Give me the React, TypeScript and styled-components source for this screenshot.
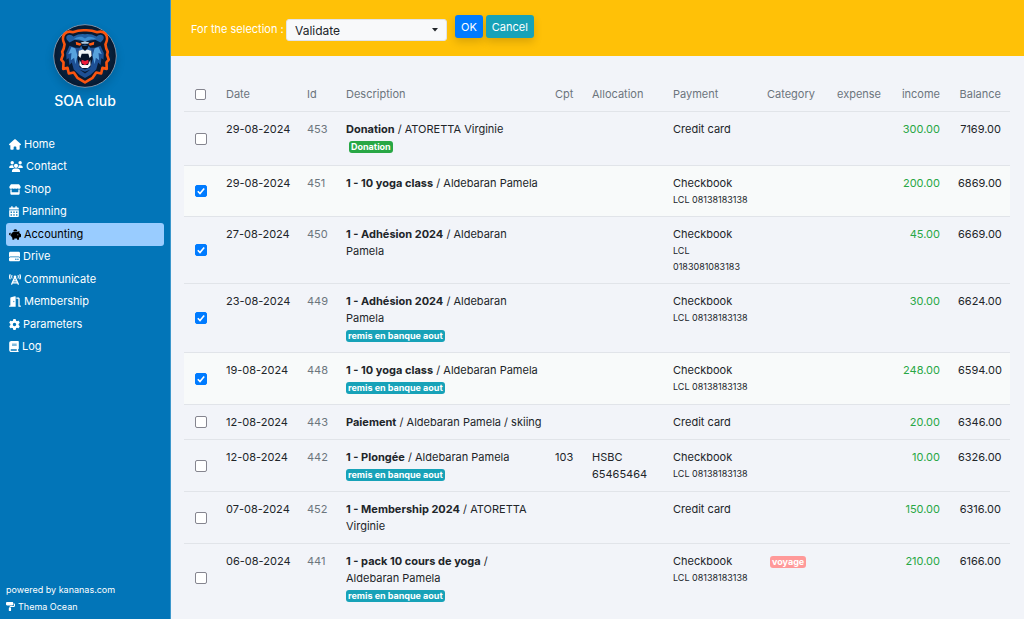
import React, { useState } from "react";
import styled, { createGlobalStyle } from "styled-components";
import {
  FaHouse, FaUsers, FaStore, FaCalendarDays, FaPiggyBank, FaHardDrive,
  FaTowerCell, FaDoorOpen, FaGear, FaBook, FaPaintRoller,
} from "react-icons/fa6";

const GlobalStyle = createGlobalStyle`
  *, *::before, *::after { box-sizing: border-box; }
  body {
    margin: 0;
    background: #f2f4f9;
    color: #212529;
    font: 11px/17px Inter, "Liberation Sans", sans-serif;
  }
  button, select, input { font-family: inherit; }
`;

const Page = styled.div`
  display: flex;
  min-height: 100vh;
`;

const Sidebar = styled.aside`
  flex: 0 0 171px;
  display: flex;
  flex-direction: column;
  padding: 24px 6px 4px;
  background: #0275b8;
  border-right: 1px solid #3c97cc;
  color: #fff;
`;

const Brand = styled.div`
  display: flex;
  flex-direction: column;
  align-items: center;
  gap: 2px;
  margin-bottom: 22px;
  font-size: 14px;
  font-weight: 500;
  line-height: 21px;
  svg {
    border-radius: 50%;
    box-shadow: 0 4px 8px rgba(0, 0, 0, 0.15);
  }
`;

const Nav = styled.nav`
  display: grid;
  grid-auto-rows: 1fr;
  height: 225px;
`;

const NavLink = styled.a<{ $active?: boolean; $iconWidth: number }>`
  display: flex;
  align-items: center;
  gap: 3px;
  padding: 0 3px;
  border-radius: 3px;
  color: ${(p) => (p.$active ? "#000" : "#fff")};
  background: ${(p) => (p.$active ? "#99ccff" : "transparent")};
  text-decoration: none;
  svg {
    width: ${(p) => p.$iconWidth}px;
    height: 11px;
  }
`;

const SideFooter = styled.footer`
  display: flex;
  flex-direction: column;
  margin-top: auto;
  font-size: 9px;
  a {
    display: flex;
    align-items: center;
    gap: 3px;
    color: #fff;
    text-decoration: none;
  }
`;

const Main = styled.main`
  flex: 1;
  min-width: 0;
`;

const SelectionBar = styled.form`
  display: flex;
  align-items: flex-start;
  height: 56px;
  padding: 15px 20px 0;
  background: #ffc107;
`;

const SelectionLabel = styled.label`
  width: 95px;
  padding-top: 6px;
  color: #fff;
  white-space: nowrap;
`;

const SelectBox = styled.div`
  display: grid;
  align-items: center;
  width: 161px;
  margin: 4px 8px 0 0;
  > * { grid-area: 1 / 1; }
  svg {
    justify-self: end;
    margin-right: 9px;
    pointer-events: none;
  }
`;

const Select = styled.select`
  appearance: none;
  width: 100%;
  height: 22px;
  padding: 0 8px;
  border: 1px solid #e0e3ea;
  border-radius: 3px;
  background: #f8f9fa;
  color: #212529;
  font-size: 12px;
`;

const Button = styled.button<{ $color: string }>`
  height: 23px;
  margin-right: 3px;
  padding: 0 6px;
  border: 0;
  border-radius: 3px;
  background: ${(p) => p.$color};
  color: #fff;
  font-size: 11px;
  box-shadow: 0 4px 8px rgba(0, 0, 0, 0.15);
`;

const TableWrap = styled.section`
  padding: 21px 14px 0 13px;
`;

const Table = styled.table`
  width: 100%;
  table-layout: fixed;
  border-collapse: separate;
  border-spacing: 0;
`;

const HeadCell = styled.th<{ $width?: number; $align?: string }>`
  width: ${(p) => (p.$width ? `${p.$width}px` : "auto")};
  padding: 9px 9px 8px;
  color: #6c757d;
  font-weight: 400;
  text-align: ${(p) => p.$align ?? "left"};
  vertical-align: middle;
`;

const Row = styled.tr<{ $highlight?: boolean }>`
  background: ${(p) => (p.$highlight ? "#f8fafa" : "transparent")};
`;

const Cell = styled.td<{ $align?: string; $color?: string }>`
  padding: 9px 9px 8px;
  border-top: 1px solid #e1e4e9;
  color: ${(p) => p.$color ?? "inherit"};
  text-align: ${(p) => p.$align ?? "left"};
  vertical-align: top;
`;

const CheckCell = styled(Cell)`
  padding: 0;
  text-align: center;
  vertical-align: middle;
`;

const DateCell = styled(Cell)`
  white-space: nowrap;
`;

const DescriptionCell = styled(Cell)`
  padding-right: 2px;
`;

const Check = styled.input<{ $small?: boolean }>`
  appearance: none;
  display: block;
  width: ${(p) => (p.$small ? 11 : 12)}px;
  height: ${(p) => (p.$small ? 11 : 12)}px;
  margin: 0 auto;
  border: 1px solid #85858f;
  border-radius: 2px;
  background: #fff;
  &:checked {
    border-color: #007bff;
    background: #007bff
      url("data:image/svg+xml,%3Csvg xmlns='http://www.w3.org/2000/svg' viewBox='0 0 10 10'%3E%3Cpath d='M1.8 5.2l2.2 2.3L8.2 2.4' fill='none' stroke='white' stroke-width='1.6'/%3E%3C/svg%3E")
      center / 10px 10px no-repeat;
  }
`;

const Note = styled.div`
  font-size: 9px;
  line-height: 16px;
`;

const BadgeLine = styled.div<{ $inset?: boolean }>`
  display: flex;
  align-items: center;
  height: 17px;
  padding-left: ${(p) => (p.$inset ? 3 : 0)}px;
`;

const DonationLine = styled(BadgeLine)`
  margin-bottom: 2px;
`;

const Badge = styled.span<{ $color: string }>`
  padding: 0 2px;
  border-radius: 3px;
  background: ${(p) => p.$color};
  color: #fff;
  font-size: 9px;
  font-weight: 700;
  line-height: 12px;
  white-space: nowrap;
`;

const TEAL = "#17a2b8";
const GREEN = "#28a745";

const navItems = [
  { label: "Home", Icon: FaHouse, width: 12 },
  { label: "Contact", Icon: FaUsers, width: 14 },
  { label: "Shop", Icon: FaStore, width: 12 },
  { label: "Planning", Icon: FaCalendarDays, width: 10 },
  { label: "Accounting", Icon: FaPiggyBank, width: 12, active: true },
  { label: "Drive", Icon: FaHardDrive, width: 11 },
  { label: "Communicate", Icon: FaTowerCell, width: 12 },
  { label: "Membership", Icon: FaDoorOpen, width: 12 },
  { label: "Parameters", Icon: FaGear, width: 11 },
  { label: "Log", Icon: FaBook, width: 10 },
];

type Entry = {
  date: string;
  id: number;
  title: string;
  who: string;
  tag?: string;
  donation?: boolean;
  cpt?: string;
  allocation?: string;
  payment: string;
  note?: string;
  category?: string;
  income: string;
  balance: string;
  checked?: boolean;
  highlight?: boolean;
};

const BANKED = "remis en banque aout";
const CHECK_NOTE = "LCL 08138183138";

const entries: Entry[] = [
  { date: "29-08-2024", id: 453, title: "Donation", who: "ATORETTA Virginie", tag: "Donation", donation: true, payment: "Credit card", income: "300.00", balance: "7169.00" },
  { date: "29-08-2024", id: 451, title: "1 - 10 yoga class", who: "Aldebaran Pamela", payment: "Checkbook", note: CHECK_NOTE, income: "200.00", balance: "6869.00", checked: true, highlight: true },
  { date: "27-08-2024", id: 450, title: "1 - Adhésion 2024", who: "Aldebaran Pamela", payment: "Checkbook", note: "LCL 0183081083183", income: "45.00", balance: "6669.00", checked: true },
  { date: "23-08-2024", id: 449, title: "1 - Adhésion 2024", who: "Aldebaran Pamela", tag: BANKED, payment: "Checkbook", note: CHECK_NOTE, income: "30.00", balance: "6624.00", checked: true },
  { date: "19-08-2024", id: 448, title: "1 - 10 yoga class", who: "Aldebaran Pamela", tag: BANKED, payment: "Checkbook", note: CHECK_NOTE, income: "248.00", balance: "6594.00", checked: true, highlight: true },
  { date: "12-08-2024", id: 443, title: "Paiement", who: "Aldebaran Pamela / skiing", payment: "Credit card", income: "20.00", balance: "6346.00" },
  { date: "12-08-2024", id: 442, title: "1 - Plongée", who: "Aldebaran Pamela", tag: BANKED, cpt: "103", allocation: "HSBC 65465464", payment: "Checkbook", note: CHECK_NOTE, income: "10.00", balance: "6326.00" },
  { date: "07-08-2024", id: 452, title: "1 - Membership 2024", who: "ATORETTA Virginie", payment: "Credit card", income: "150.00", balance: "6316.00" },
  { date: "06-08-2024", id: 441, title: "1 - pack 10 cours de yoga", who: "Aldebaran Pamela", tag: BANKED, payment: "Checkbook", note: CHECK_NOTE, category: "voyage", income: "210.00", balance: "6166.00" },
];

function BearLogo() {
  return (
    <svg width="64" height="64" viewBox="0 0 194 194" role="img" aria-label="SOA club bear">
      <defs>
        <radialGradient id="disc" cx="50%" cy="50%" r="50%">
          <stop offset="0" stopColor="#0c3155" />
          <stop offset="0.75" stopColor="#082340" />
          <stop offset="1" stopColor="#06182f" />
        </radialGradient>
      </defs>
      <circle cx="97" cy="97" r="95" fill="url(#disc)" stroke="#8796aa" strokeWidth="3" />
      <path
        d="M35 62Q25 42 35 30Q44 20 60 25Q78 18 97 19Q116 18 134 25Q150 20 159 30Q169 42 159 62Q160 74 166 84L164 94L169 108L162 116L163 136L150 133L146 150L131 147L120 163L97 177L74 163L63 147L48 150L44 133L31 136L32 116L25 108L30 94L28 84Q34 74 35 62Z"
        fill="#071a33" stroke="#fa5510" strokeWidth="8" strokeLinejoin="round"
      />
      <path d="M42 48Q37 36 46 33Q56 31 62 38Q78 29 97 31Q116 29 132 38Q138 31 148 33Q157 36 152 48L144 56L128 48L97 52L66 48L50 56Z" fill="#2260a3" />
      <path d="M62 46Q74 36 88 39L97 44L106 39Q120 36 132 46L116 46L97 53L78 46Z" fill="#3e8ed0" />
      <path d="M50 66L40 88L41 108L47 103L50 124L57 117L63 138L80 154L97 164L114 154L131 138L137 117L144 124L147 103L153 108L154 88L144 66L126 72H68Z" fill="#1d4f94" />
      <path d="M56 70L46 92L56 88L54 110L64 102L68 122L74 96L68 74ZM138 70L148 92L138 88L140 110L130 102L126 122L120 96L126 74Z" fill="#58a3de" />
      <path d="M62 52L88 58L106 58L132 52L128 70L110 68L97 62L84 68L66 70Z" fill="#071a33" />
      <path d="M69 54L87 60L82 66L70 63ZM125 54L107 60L112 66L124 63Z" fill="#ff5b14" />
      <path d="M84 56L97 52L110 56L106 60H88Z" fill="#b4cbe0" />
      <path d="M84 68L97 62L110 68L118 84H76Z" fill="#2b68b0" />
      <path d="M86 66H108L104 76L97 80L90 76Z" fill="#050f20" />
      <path d="M77 82L92 77L97 82L102 77L117 82L120 106L113 131L97 138L81 131L74 106Z" fill="#06142a" />
      <path d="M78 81L91 77L97 82L103 77L116 81L117 96L111 103L107 90H87L83 103L77 96Z" fill="#f1f5f8" />
      <path d="M81 109L88 124H106L113 109L114 125L106 133H88L80 125Z" fill="#f5f7f8" />
      <path d="M87 108L97 112L107 108L108 118L97 125L86 118Z" fill="#ee1c3a" />
      <path d="M80 138L97 145L114 138L97 150Z" fill="#071a33" />
    </svg>
  );
}

export default function App() {
  const [selected, setSelected] = useState(() => new Set(entries.filter((e) => e.checked).map((e) => e.id)));

  const toggle = (id: number) =>
    setSelected((current) => {
      const next = new Set(current);
      if (!next.delete(id)) next.add(id);
      return next;
    });

  const all = selected.size === entries.length;

  return (
    <>
      <GlobalStyle />
      <Page>
        <Sidebar>
          <Brand>
            <BearLogo />
            <span>SOA club</span>
          </Brand>
          <Nav>
            {navItems.map(({ label, Icon, width, active }) => (
              <NavLink key={label} href="#" $active={active} $iconWidth={width}>
                <Icon />
                {label}
              </NavLink>
            ))}
          </Nav>
          <SideFooter>
            <a href="#">powered by kananas.com</a>
            <a href="#"><FaPaintRoller />Thema Ocean</a>
          </SideFooter>
        </Sidebar>
        <Main>
          <SelectionBar onSubmit={(e) => e.preventDefault()}>
            <SelectionLabel htmlFor="action">For the selection :</SelectionLabel>
            <SelectBox>
              <Select id="action">
                <option>Validate</option>
              </Select>
              <svg width="6" height="4" viewBox="0 0 6 4" aria-hidden="true">
                <path d="M0 0h6L3 3.5z" fill="#212529" />
              </svg>
            </SelectBox>
            <Button type="submit" $color="#007bff">OK</Button>
            <Button type="button" $color={TEAL}>Cancel</Button>
          </SelectionBar>
          <TableWrap>
            <Table>
              <thead>
                <tr>
                  <HeadCell $width={33}>
                    <Check
                      type="checkbox"
                      $small
                      aria-label="Select all"
                      checked={all}
                      onChange={() => setSelected(new Set(all ? [] : entries.map((e) => e.id)))}
                    />
                  </HeadCell>
                  <HeadCell $width={81}>Date</HeadCell>
                  <HeadCell $width={39}>Id</HeadCell>
                  <HeadCell>Description</HeadCell>
                  <HeadCell $width={37}>Cpt</HeadCell>
                  <HeadCell $width={81}>Allocation</HeadCell>
                  <HeadCell $width={94}>Payment</HeadCell>
                  <HeadCell $width={70}>Category</HeadCell>
                  <HeadCell $width={61} $align="right">expense</HeadCell>
                  <HeadCell $width={60} $align="right">income</HeadCell>
                  <HeadCell $width={61} $align="right">Balance</HeadCell>
                </tr>
              </thead>
              <tbody>
                {entries.map((e) => (
                  <Row key={e.id} $highlight={e.highlight}>
                    <CheckCell>
                      <Check
                        type="checkbox"
                        aria-label={`Select ${e.id}`}
                        checked={selected.has(e.id)}
                        onChange={() => toggle(e.id)}
                      />
                    </CheckCell>
                    <DateCell>{e.date}</DateCell>
                    <Cell $color="#6c757d">{e.id}</Cell>
                    <DescriptionCell>
                      <strong>{e.title}</strong> / {e.who}
                      {e.donation && (
                        <DonationLine $inset>
                          <Badge $color={GREEN}>{e.tag}</Badge>
                        </DonationLine>
                      )}
                      {e.tag && !e.donation && (
                        <BadgeLine>
                          <Badge $color={TEAL}>{e.tag}</Badge>
                        </BadgeLine>
                      )}
                    </DescriptionCell>
                    <Cell>{e.cpt}</Cell>
                    <Cell>{e.allocation}</Cell>
                    <Cell>
                      {e.payment}
                      {e.note && <Note>{e.note}</Note>}
                    </Cell>
                    <Cell>
                      {e.category && (
                        <BadgeLine $inset>
                          <Badge $color="#ff9999">{e.category}</Badge>
                        </BadgeLine>
                      )}
                    </Cell>
                    <Cell />
                    <Cell $align="right" $color={GREEN}>{e.income}</Cell>
                    <Cell $align="right">{e.balance}</Cell>
                  </Row>
                ))}
              </tbody>
            </Table>
          </TableWrap>
        </Main>
      </Page>
    </>
  );
}
